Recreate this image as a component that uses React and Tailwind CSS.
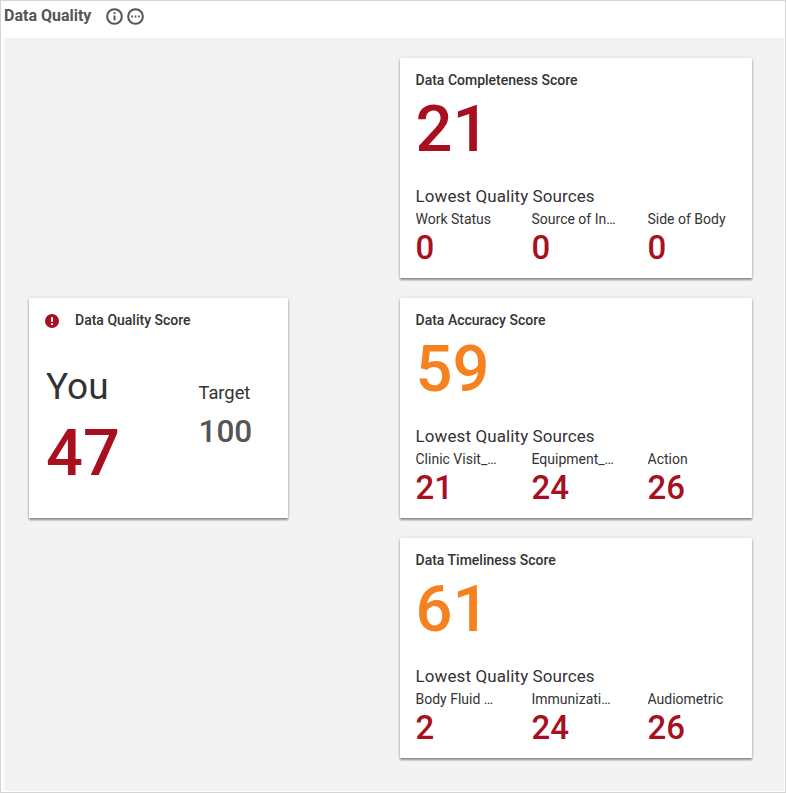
import React from 'react';

const sections = [
  {
    title: 'Data Completeness Score',
    score: 21,
    color: 'text-[#a8101f]',
    sources: [
      { name: 'Work Status', value: 0 },
      { name: 'Source of Injury', value: 0 },
      { name: 'Side of Body', value: 0 },
    ],
  },
  {
    title: 'Data Accuracy Score',
    score: 59,
    color: 'text-[#f5821f]',
    sources: [
      { name: 'Clinic Visit_Details', value: 21 },
      { name: 'Equipment_Details', value: 24 },
      { name: 'Action', value: 26 },
    ],
  },
  {
    title: 'Data Timeliness Score',
    score: 61,
    color: 'text-[#f5821f]',
    sources: [
      { name: 'Body Fluid Exposure', value: 2 },
      { name: 'Immunizations', value: 24 },
      { name: 'Audiometric', value: 26 },
    ],
  },
];

const cardClass = 'h-[220px] bg-white shadow-[0_2px_2px_rgba(0,0,0,0.4),0_0_4px_rgba(0,0,0,0.12)]';

const ScoreCard = ({ section }) => (
  <div className={`${cardClass} w-[352px] pt-[14px] pl-[15.5px]`}>
    <div className="text-[14px] leading-[17px] font-medium text-[#333]">{section.title}</div>
    <div className={`mt-[-2px] text-[65px] leading-[84px] font-medium ${section.color}`}>{section.score}</div>
    <div className="mt-[15px] text-[17px] leading-[20px] tracking-[0.1px] text-[#333]">Lowest Quality Sources</div>
    <div className="flex pt-[3px]">
      {section.sources.map((source) => (
        <div key={source.name} className="w-[116px] shrink-0">
          <div className="w-[85px] truncate text-[14px] leading-[20px] text-[#333]">{source.name}</div>
          <div className="text-[33px] leading-[38px] font-medium text-[#a8101f]">{source.value}</div>
        </div>
      ))}
    </div>
  </div>
);

const App = () => {
  return (
    <div className="h-[793px] w-[786px] overflow-hidden border border-[#d4d4d4] bg-white font-['Roboto',sans-serif]">
      <div className="flex h-[37px] items-start pl-[3px] pt-[5px]">
        <span className="text-[16px] leading-[20px] font-bold text-[#555]">Data Quality</span>
        <svg className="ml-[15px] mt-[2px]" width="17" height="17" viewBox="0 0 16 16" fill="none" stroke="#555" strokeWidth="1.9">
          <circle cx="8" cy="8" r="6.9" />
          <path d="M8 7v4.5M8 4v1.7" />
        </svg>
        <svg className="ml-[4px] mt-[2px]" width="17" height="17" viewBox="0 0 16 16" fill="none" stroke="#555" strokeWidth="1.9">
          <circle cx="8" cy="8" r="6.9" />
          <path d="M4 8h1.6M7.2 8h1.6M10.4 8h1.6" />
        </svg>
      </div>
      <div className="ml-[3px] mr-[1px] flex items-center gap-[112px] bg-[#f3f3f3] pb-[33px] pl-[25px] pt-[20px]">
        <div className={`${cardClass} w-[259px]`}>
          <div className="flex items-center pl-[16px] pt-[14px]">
            <svg width="14" height="14" viewBox="0 0 14 14">
              <circle cx="7" cy="7" r="7" fill="#a8101f" />
              <path d="M7 3.2v4.6M7 9.3v1.6" stroke="#fff" strokeWidth="2" />
            </svg>
            <span className="ml-[16px] text-[14px] leading-[17px] font-medium text-[#333]">Data Quality Score</span>
          </div>
          <div className="flex pl-[17px] pt-[37px]">
            <div className="w-[153px]">
              <div className="text-[37px] leading-[42px] font-normal text-[#333]">You</div>
              <div className="mt-[3px] text-[65px] leading-[84px] font-medium text-[#a8101f]">47</div>
            </div>
            <div className="pt-[15px]">
              <div className="ml-[-0.5px] text-[18.3px] leading-[24px] text-[#333]">Target</div>
              <div className="ml-[-0.5px] mt-[7px] text-[31.5px] leading-[40px] font-medium text-[#555]">100</div>
            </div>
          </div>
        </div>
        <div className="flex flex-col gap-[20px]">
          {sections.map((section) => (
            <ScoreCard key={section.title} section={section} />
          ))}
        </div>
      </div>
    </div>
  );
};

export default App;
